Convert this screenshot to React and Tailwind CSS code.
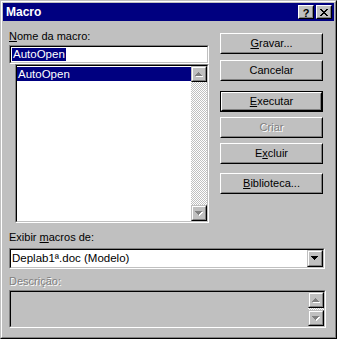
import React from "react";

const FONT = "font-['Liberation_Sans',Arial,sans-serif]";
const DITHER =
  "bg-[repeating-conic-gradient(#c0c0c0_0%_25%,#ffffff_0%_50%)] bg-[length:2px_2px]";

// Win95 bevels
const Sunken = ({ className = "", inner = "", children }) => (
  <div className={`border border-t-[#808080] border-l-[#808080] border-b-white border-r-white ${className}`}>
    <div className={`h-full border border-t-black border-l-black border-b-[#c0c0c0] border-r-[#c0c0c0] ${inner}`}>
      {children}
    </div>
  </div>
);

const Arrow = ({ dir = "up", disabled = false }) => {
  const rows = [
    [3, 1],
    [2, 3],
    [1, 5],
    [0, 7],
  ];
  const order = dir === "up" ? rows : [...rows].reverse();
  const shape = (dx, dy, fill) =>
    order.map(([x, w], i) => <rect key={`${fill}${i}`} x={x + dx} y={i + dy} width={w} height={1} fill={fill} />);
  return (
    <svg width="8" height="5" viewBox="0 0 8 5" shapeRendering="crispEdges">
      {disabled && shape(1, 1, "#ffffff")}
      {shape(0, 0, disabled ? "#808080" : "#000000")}
    </svg>
  );
};

const ScrollBtn = ({ dir, disabled, className = "" }) => (
  <div className={`w-[16px] h-[16px] shrink-0 bg-[#c0c0c0] border border-t-[#c0c0c0] border-l-[#c0c0c0] border-b-black border-r-black ${className}`}>
    <div className="h-full border border-t-white border-l-white border-b-[#808080] border-r-[#808080] flex items-center justify-center">
      <Arrow dir={dir} disabled={disabled} />
    </div>
  </div>
);

const Button = ({ children, disabled, isDefault, className = "" }) => {
  const face = (
    <div className="h-full border border-t-white border-l-white border-b-black border-r-black">
      <div
        className={`h-full border border-t-[#c0c0c0] border-l-[#c0c0c0] border-b-[#808080] border-r-[#808080] flex items-center justify-center text-[11px] leading-[13px] ${
          disabled ? "text-[#808080] [text-shadow:1px_1px_0_#fff]" : "text-black"
        }`}
      >
        {children}
      </div>
    </div>
  );
  return (
    <div className={`w-[103px] h-[21px] ${isDefault ? "border border-black" : ""} ${className}`}>{face}</div>
  );
};

const TitleBtn = ({ children }) => (
  <div className="w-[16px] h-[14px] bg-[#c0c0c0] border border-t-white border-l-white border-b-black border-r-black">
    <div className="h-full border border-t-[#c0c0c0] border-l-[#c0c0c0] border-b-[#808080] border-r-[#808080] flex items-center justify-center">
      {children}
    </div>
  </div>
);

export default function App() {
  return (
    <div className={`w-[337px] h-[339px] bg-[#c0c0c0] ${FONT} select-none`}>
      {/* window frame */}
      <div className="h-full border border-t-[#c0c0c0] border-l-[#c0c0c0] border-b-black border-r-black">
        <div className="h-full border border-t-white border-l-white border-b-[#808080] border-r-[#808080] p-[1px] flex flex-col">
          {/* Title bar */}
          <div className="h-[18px] shrink-0 bg-[#000080] flex items-center justify-between pl-[3px] pr-[2px]">
            <span className="text-white font-bold text-[12px] leading-[14px]">Macro</span>
            <div className="flex gap-[2px]">
              <TitleBtn>
                <span className="text-black font-bold text-[11px] leading-[10px] mt-[1px]">?</span>
              </TitleBtn>
              <TitleBtn>
                <svg width="8" height="7" viewBox="0 0 8 7" shapeRendering="crispEdges">
                  {[0, 1, 2, 3, 4, 5, 6].map((i) => (
                    <g key={i}>
                      <rect x={i} y={i} width={2} height={1} fill="#000" />
                      <rect x={6 - i} y={i} width={2} height={1} fill="#000" />
                    </g>
                  ))}
                </svg>
              </TitleBtn>
            </div>
          </div>

          {/* Body */}
          <div className="flex-1 pl-[6px] text-[11px] leading-[13px] text-black">
            <div className="flex">
              {/* Left column */}
              <div className="w-[200px] pt-[9px]">
                <div>
                  <u>N</u>ome da macro:
                </div>
                <Sunken className="mt-[2px] h-[19px] bg-white" inner="flex items-center pl-[1px]">
                  <span className="bg-[#000080] text-white text-[11.5px] leading-[13px] px-[1px]">AutoOpen</span>
                </Sunken>
                <Sunken className="ml-[6px] w-[194px] h-[159px] bg-white" inner="flex">
                  <div className="flex-1 pt-[1px]">
                    <div className="h-[14px] bg-[#000080] text-white text-[11.5px] leading-[14px] pl-[1px]">AutoOpen</div>
                  </div>
                  <div className={`w-[16px] flex flex-col justify-between ${DITHER}`}>
                    <ScrollBtn dir="up" disabled />
                    <ScrollBtn dir="down" disabled />
                  </div>
                </Sunken>
              </div>

              {/* Right column */}
              <div className="ml-[11px] pt-[12px] flex flex-col">
                <Button>
                  <span>
                    <u>G</u>ravar...
                  </span>
                </Button>
                <Button className="mt-[6px]">Cancelar</Button>
                <Button isDefault className="mt-[10px]">
                  <span>
                    <u>E</u>xecutar
                  </span>
                </Button>
                <Button disabled className="mt-[5px]">
                  Criar
                </Button>
                <Button className="mt-[5px]">
                  <span>
                    E<u>x</u>cluir
                  </span>
                </Button>
                <Button className="mt-[9px]">
                  <span>
                    <u>B</u>iblioteca...
                  </span>
                </Button>
              </div>
            </div>

            {/* Bottom section */}
            <div className="mt-[8px]">
              Exibir <u>m</u>acros de:
            </div>
            <Sunken className="mt-[4px] w-[316px] h-[21px] bg-white" inner="flex items-center">
              <span className="flex-1 pl-[1px] text-[11.5px] leading-[13px]">Deplab1ª.doc (Modelo)</span>
              <ScrollBtn dir="down" className="h-[17px]" />
            </Sunken>
            <div className="mt-[6px] text-[#808080] [text-shadow:1px_1px_0_#fff]">Descrição:</div>
            <Sunken className="mt-[2px] w-[317px] h-[38px] bg-[#c0c0c0]" inner="flex">
              <div className="flex-1" />
              <div className={`w-[16px] flex flex-col justify-between ${DITHER}`}>
                <ScrollBtn dir="up" disabled className="h-[15px]" />
                <ScrollBtn dir="down" disabled className="h-[15px]" />
              </div>
            </Sunken>
          </div>
        </div>
      </div>
    </div>
  );
}
